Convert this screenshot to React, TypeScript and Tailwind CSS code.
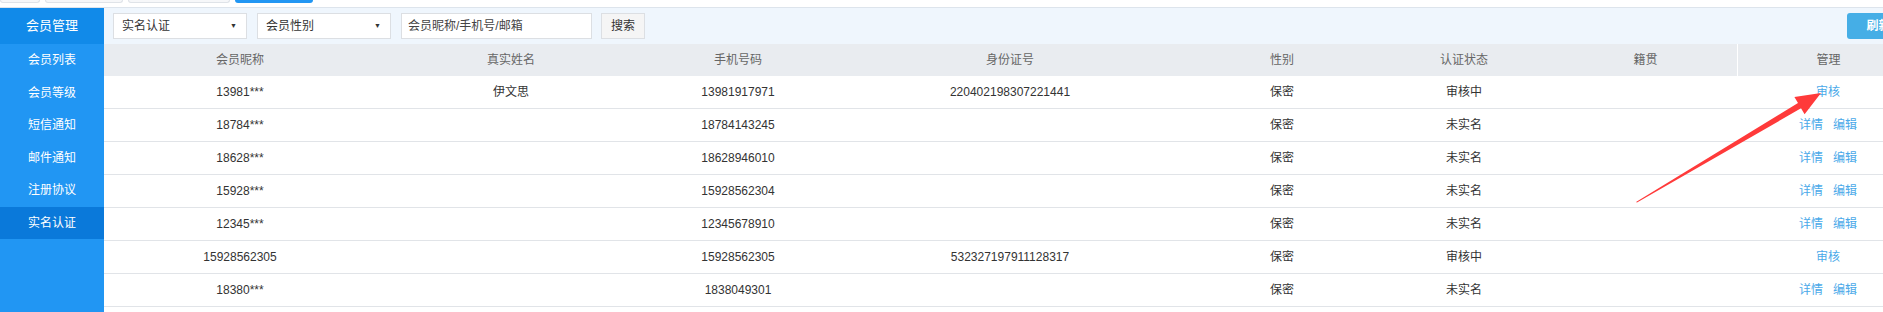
const menu = ["会员列表", "会员等级", "短信通知", "邮件通知", "注册协议", "实名认证"];

const cols = [
  { title: "会员昵称", w: "w-[272px]" },
  { title: "真实姓名", w: "w-[270px]" },
  { title: "手机号码", w: "w-[184px]" },
  { title: "身份证号", w: "w-[360px]" },
  { title: "性别", w: "w-[184px]" },
  { title: "认证状态", w: "w-[180px]" },
  { title: "籍贯", w: "w-[183px]" },
  { title: "管理", w: "w-[182px]" },
];

const rows = [
  ["13981***", "伊文思", "13981917971", "220402198307221441", "保密", "审核中", "", "audit"],
  ["18784***", "", "18784143245", "", "保密", "未实名", "", "edit"],
  ["18628***", "", "18628946010", "", "保密", "未实名", "", "edit"],
  ["15928***", "", "15928562304", "", "保密", "未实名", "", "edit"],
  ["12345***", "", "12345678910", "", "保密", "未实名", "", "edit"],
  ["15928562305", "", "15928562305", "532327197911128317", "保密", "审核中", "", "audit"],
  ["18380***", "", "1838049301", "", "保密", "未实名", "", "edit"],
];

function Select({ label }: { label: string }) {
  return (
    <div className="w-[134px] h-[26px] bg-white border border-[#dcdfe3] flex items-center justify-between pl-[8px] pr-[9px] text-[12px] text-[#333]">
      <span>{label}</span>
      <span className="text-[7px] text-[#333]">▼</span>
    </div>
  );
}

function Actions({ kind }: { kind: string }) {
  if (kind === "audit") return <span className="text-[#4aa9e9]">审核</span>;
  return (
    <span className="flex gap-[10px] text-[#4aa9e9]">
      <span>详情</span>
      <span>编辑</span>
    </span>
  );
}

export default function App() {
  return (
    <div className="relative w-[1883px] h-[312px] overflow-hidden bg-white font-['Liberation_Sans','Noto_Sans_CJK_SC',sans-serif]">
      {/* tab strip, mostly scrolled out of view */}
      <div className="h-[8px] border-b border-[#dde4ec] flex gap-[5px] items-start">
        <div className="w-[40px] h-[3px] border border-t-0 border-[#dfe3e8] bg-[#f6f7f9] rounded-b-[3px]"></div>
        <div className="w-[78px] h-[3px] border border-t-0 border-[#dfe3e8] bg-[#f6f7f9] rounded-b-[3px]"></div>
        <div className="w-[102px] h-[3px] border border-t-0 border-[#dfe3e8] bg-[#f6f7f9] rounded-b-[3px]"></div>
        <div className="w-[78px] h-[3px] bg-[#2196f3] rounded-b-[3px]"></div>
      </div>

      <div className="flex h-[304px]">
        <div className="w-[104px] shrink-0 bg-[#2196f3] text-white text-[12px]">
          <div className="h-[36px] bg-[#118ae9] flex items-center justify-center text-[13px]">会员管理</div>
          {menu.map((m) => (
            <div
              key={m}
              className={
                m === "实名认证"
                  ? "h-[32.5px] flex items-center justify-center bg-[#0a79da]"
                  : "h-[32.5px] flex items-center justify-center"
              }
            >
              {m}
            </div>
          ))}
        </div>

        <div className="w-[1815px] shrink-0">
          <div className="h-[36px] bg-[#eff6fd] flex items-center pl-[9px] pr-[9px] text-[12px]">
            <Select label="实名认证" />
            <div className="w-[10px]"></div>
            <Select label="会员性别" />
            <div className="w-[10px]"></div>
            <div className="w-[191px] h-[26px] bg-white border border-[#dcdfe3] flex items-center pl-[6px] text-[#444]">
              会员昵称/手机号/邮箱
            </div>
            <div className="w-[9px]"></div>
            <div className="w-[44px] h-[26px] bg-[#f5f5f5] border border-[#dcdfe3] flex items-center justify-center text-[#333]">
              搜索
            </div>
            <div className="ml-auto w-[63px] h-[26px] bg-[#45aee6] rounded-[3px] flex items-center justify-center text-white font-bold">
              刷新
            </div>
          </div>

          <div className="flex h-[32px] bg-[#e9ecf0] text-[12px] text-[#666]">
            {cols.map((c, i) => (
              <div
                key={c.title}
                className={
                  i === 7
                    ? c.w + " flex items-center justify-center border-l border-white"
                    : c.w + " flex items-center justify-center"
                }
              >
                {c.title}
              </div>
            ))}
          </div>

          {rows.map((r, ri) => (
            <div key={ri} className="flex h-[33px] border-b border-[#e1e4e8] text-[12px] text-[#333]">
              {cols.map((c, i) => (
                <div key={c.title} className={c.w + " flex items-center justify-center"}>
                  {i === 7 ? <Actions kind={r[7]} /> : r[i]}
                </div>
              ))}
            </div>
          ))}
        </div>
      </div>

      {/* red annotation arrow */}
      <svg className="absolute left-0 top-0 pointer-events-none" width="1883" height="312">
        <polygon
          points="1636,202 1798,103 1794.4,97.1 1821,93 1804.6,114.3 1801,108.3 1637,202.6"
          fill="#ff3a3a"
        />
      </svg>
    </div>
  );
}
